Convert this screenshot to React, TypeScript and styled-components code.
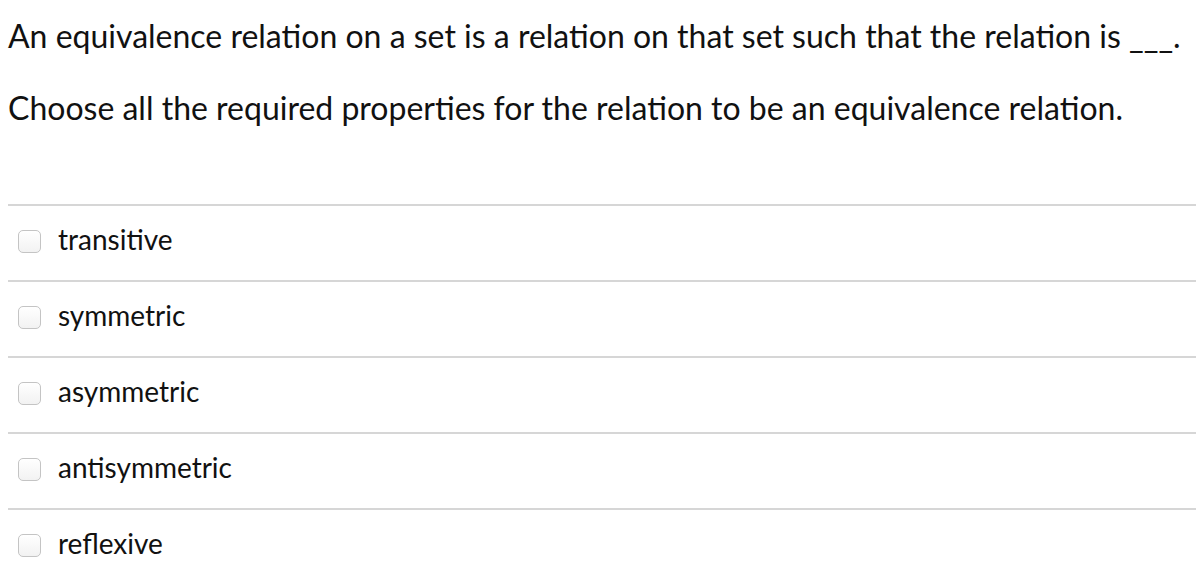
import React from "react";
import styled, { createGlobalStyle } from "styled-components";

const Global = createGlobalStyle`
  html, body { margin: 0; padding: 0; background: #fff; }
  body { font-family: Lato, "Open Sans", sans-serif; color: #111; }
`;

const Page = styled.div`
  padding: 17px 0 0 8px;
  width: 1196px;
  box-sizing: border-box;
`;

const Prompt = styled.p`
  margin: 0;
  font-size: 32px;
  line-height: 38px;
  color: #111;
  white-space: nowrap;
`;

const Instruction = styled(Prompt)`
  margin-top: 34px;
`;

const Options = styled.div`
  margin-top: 77px;
  display: flex;
  flex-direction: column;
`;

const Row = styled.label`
  display: flex;
  align-items: center;
  gap: 17px;
  height: 74px;
  border-top: 2px solid #d6d6d6;
  padding-left: 10px;
`;

const Box = styled.span`
  box-sizing: border-box;
  width: 23px;
  height: 23px;
  border: 1px solid #c4c4c4;
  border-radius: 5px;
  background: linear-gradient(#ffffff, #f2f2f2);
  flex: none;
  margin-top: -3px;
`;

const Label = styled.span`
  font-size: 28px;
  color: #111;
  margin-top: -8px;
`;

const options = ["transitive", "symmetric", "asymmetric", "antisymmetric", "reflexive"];

export default function App() {
  return (
    <>
      <Global />
      <Page>
        <Prompt>An equivalence relation on a set is a relation on that set such that the relation is ___.</Prompt>
        <Instruction>Choose all the required properties for the relation to be an equivalence relation.</Instruction>
        <Options>
          {options.map((o) => (
            <Row key={o}>
              <Box />
              <Label>{o}</Label>
            </Row>
          ))}
        </Options>
      </Page>
    </>
  );
}
